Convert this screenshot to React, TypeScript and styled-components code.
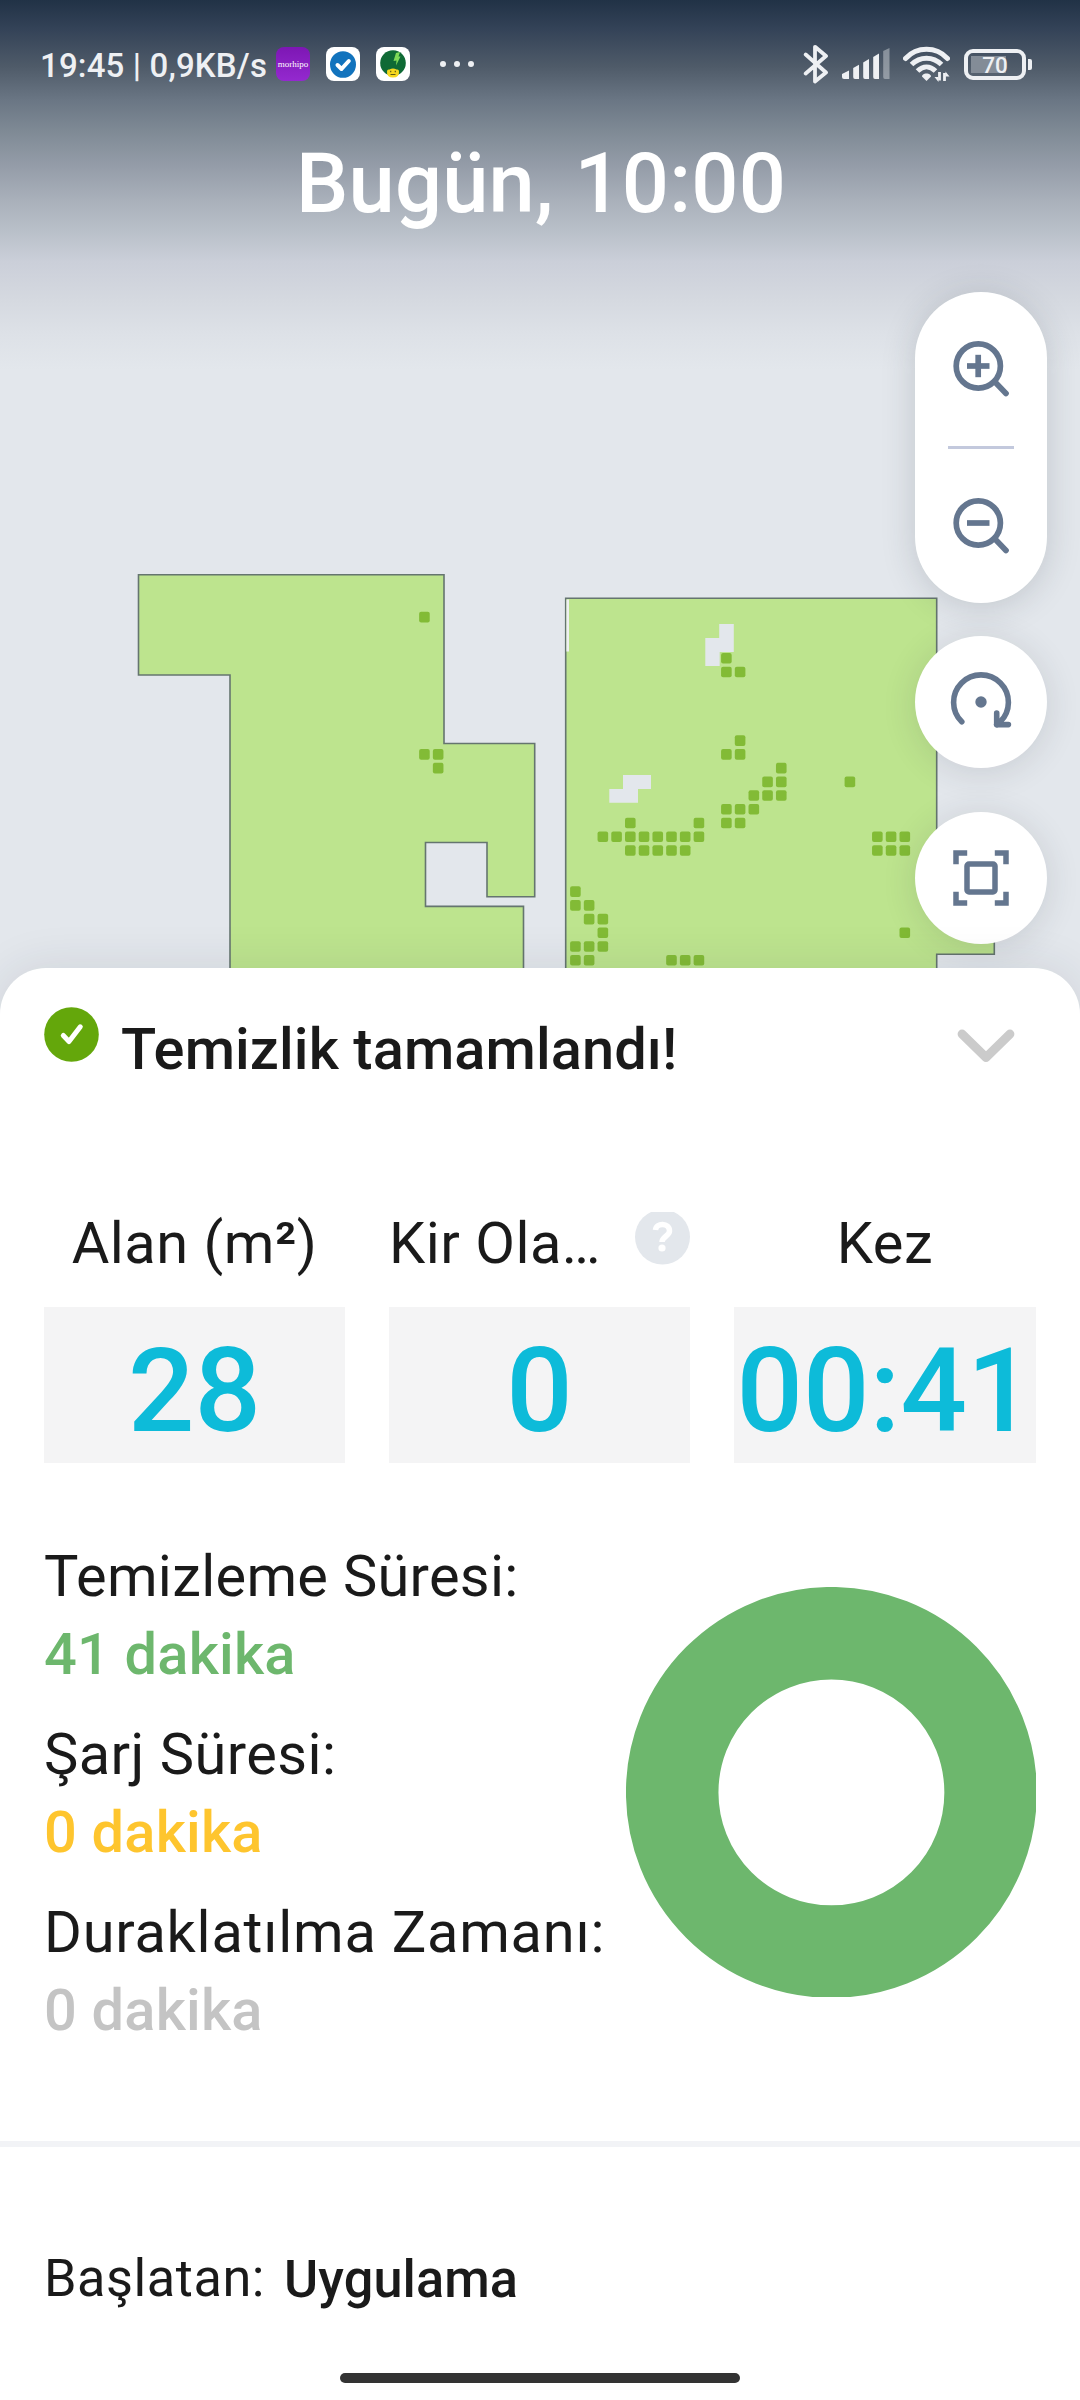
import * as React from 'react';
import styled, { createGlobalStyle } from 'styled-components';

const FONT = 'Roboto, "Noto Sans", sans-serif';

const GRID = { x: 575.4, y: 658.3, step: 13.725, size: 10.6 };

// [row, first column, last column]
const DIRT: number[][] = [
    [-3, -11, -11],
    [0, 11, 11],
    [1, 11, 12],
    [6, 12, 12],
    [7, -11, -10],
    [7, 11, 12],
    [8, -10, -10],
    [8, 15, 15],
    [9, 14, 15],
    [9, 20, 20],
    [10, 13, 15],
    [11, 11, 13],
    [12, 4, 4],
    [12, 9, 9],
    [12, 11, 12],
    [13, 2, 9],
    [13, 22, 24],
    [14, 4, 8],
    [14, 22, 24],
    [17, 0, 0],
    [18, 0, 1],
    [19, 1, 2],
    [20, 2, 2],
    [20, 24, 24],
    [21, 0, 2],
    [22, 0, 1],
    [22, 7, 9],
];

const TIMES = [
    { label: 'Temizleme Süresi:', value: '41 dakika', color: '#6db76d', tracking: 0.3 },
    { label: 'Şarj Süresi:', value: '0 dakika', color: '#fec52e', tracking: 0.45 },
    { label: 'Duraklatılma Zamanı:', value: '0 dakika', color: '#c4c4c4', tracking: 0.75 },
];

const DirtSpots = () => (
    <g fill="#82bb36">
        {DIRT.map(([row, from, to]) => {
            const spots: React.ReactNode[] = [];

            for (let col = from; col <= to; col++) {
                spots.push(
                    <rect
                        key={`${row}-${col}`}
                        x={GRID.x + col * GRID.step - GRID.size / 2}
                        y={GRID.y + row * GRID.step - GRID.size / 2}
                        width={GRID.size}
                        height={GRID.size}
                        rx="2"
                    />
                );
            }

            return spots;
        })}
    </g>
);

const FloorMap = () => (
    <MapCanvas width="1080" height="1030" viewBox="0 0 1080 1030">
        <g fill="#bde48e" stroke="#65756f" strokeWidth="1.6">
            <path d="M138.5 574.7H444V743.5H534.7V896.7H487V842.5H425.5V906.4H523.5V1040H230V675H138.5Z" />
            <path d="M565.7 598.3H936.7V890H994.3V954.3H936.7V1040H565.7Z" />
        </g>
        <path d="M566.4 599.5H569V651.5H566.4Z" fill="#eef0f2" />
        <g fill="#e3e7ec">
            <path d="M719.2 624H733.8V652H719.7V666H705.3V638H719.2Z" />
            <path d="M623 775H651V789H638V802.8H609.3V789H623Z" />
        </g>
        <DirtSpots />
    </MapCanvas>
);

const BluetoothIcon = () => (
    <svg width="26" height="40" viewBox="0 0 26 40" fill="none" stroke="#eef0f3" strokeWidth="3.8" strokeLinecap="round" strokeLinejoin="round">
        <path d="M2.7 10.5L23 28.5L12 37.5V2.8L23 12L2.7 29.5" />
    </svg>
);

const SignalIcon = () => (
    <svg width="48" height="32" viewBox="0 0 48 32" fill="#eef0f3">
        <path d="M0 26L7 22.5V31H2Q0 31 0 29Z" />
        <path d="M11.2 20L17 16.7V31H13Q11.2 31 11.2 29Z" />
        <path d="M21.2 14.5L27 11V31H23Q21.2 31 21.2 29Z" />
        <path d="M31.2 9L37 5.5V31H33Q31.2 31 31.2 29Z" />
        <path d="M41.2 3L47.5 0V31H43Q41.2 31 41.2 29Z" opacity="0.4" />
    </svg>
);

const WifiIcon = () => (
    <svg width="47" height="36" viewBox="0 0 47 36" fill="none" stroke="#eef0f3">
        <path d="M2.5 12.5C14 0.3 33 0.3 44.5 12.5" strokeWidth="5" strokeLinecap="round" />
        <path d="M8.5 18.5C17 10 30 10 38.5 18.5" strokeWidth="5" />
        <path d="M14.5 25C20 19.5 27 19.5 32.5 25" strokeWidth="5" />
        <path d="M23.5 27.5C26 27.5 28.3 29 28 30.5L23.5 35L19 30.5C18.7 29 21 27.5 23.5 27.5Z" fill="#eef0f3" stroke="none" />
        <path d="M36.5 26V34.5M41.5 35V27" strokeWidth="2.8" />
        <path d="M31.5 31H35.5V36ZM46.5 30.5H42.5V25.5Z" fill="#eef0f3" stroke="none" />
    </svg>
);

const ZoomIcon = ({ plus }: { plus?: boolean }) => (
    <svg width="56" height="58" viewBox="0 0 56 58" fill="none" stroke="#64768f" strokeWidth="5.7">
        <circle cx="25.3" cy="25" r="22.1" />
        <path d="M14 25H36.5" />
        {plus && <path d="M25.2 13.8V36.2" />}
        <path d="M42 41L53 52.5" strokeLinecap="round" />
    </svg>
);

const RotateIcon = () => (
    <svg width="66" height="66" viewBox="0 0 66 66" fill="none" stroke="#64768f" strokeWidth="5.6" strokeLinecap="round" strokeLinejoin="round">
        <path d="M13.8 52.8A27.4 27.4 0 1 1 52.2 52.8" />
        <path d="M48.7 44V55.6H60.4" />
        <path d="M48.7 55.6L52.5 52.3" />
        <circle cx="33" cy="33" r="5.7" fill="#64768f" stroke="none" />
    </svg>
);

const FitIcon = () => (
    <svg width="56" height="56" viewBox="0 0 56 56" fill="none" stroke="#64768f" strokeWidth="5.5">
        <path d="M3 14.2V3H14.2M41.8 3H53V14.2M53 41.8V53H41.8M14.2 53H3V41.8" />
        <rect x="14" y="14" width="28" height="28" rx="2" />
    </svg>
);

const TaskAppIcon = () => (
    <svg width="26" height="27" viewBox="0 0 26 27">
        <ellipse cx="13" cy="13.5" rx="13" ry="13.3" fill="#1273bd" />
        <path d="M7.5 14L11.5 18L18.8 10" fill="none" stroke="#fff" strokeWidth="4" strokeLinecap="round" strokeLinejoin="round" />
    </svg>
);

const EnergyAppIcon = () => (
    <svg width="26" height="28" viewBox="0 0 26 28">
        <circle cx="13" cy="13" r="12.8" fill="#0f6a35" />
        <path d="M16 3L20 2L18.5 6.5H20.5L16 15.5L16.5 10.5L13.5 11Z" fill="#7ed957" />
        <path d="M7 21.5Q7 19 9.5 19.5Q13 17.5 16.5 19.5Q19 19 19 21.5Q19.5 27.5 13 27.5Q6.5 27.5 7 21.5Z" fill="#f7d81e" />
        <path d="M10.5 24.5H15.5M10.7 20.8V22.3M15.3 20.8V22.3" stroke="#5d5a14" strokeWidth="1.2" />
    </svg>
);

const CheckIcon = () => (
    <svg width="55" height="55" viewBox="0 0 55 55">
        <circle cx="27.5" cy="27.5" r="27.3" fill="#64a70b" />
        <path d="M19.3 28.5L25 34.5L36.3 19.8" fill="none" stroke="#fff" strokeWidth="5" strokeLinecap="round" strokeLinejoin="round" />
    </svg>
);

const ChevronIcon = () => (
    <svg width="58" height="34" viewBox="0 0 58 34" fill="none" stroke="#cbcbcb" strokeWidth="8.8" strokeLinecap="round" strokeLinejoin="round">
        <path d="M5 5L29 28.5L53 5" />
    </svg>
);

const HelpIcon = () => (
    <svg width="55" height="53" viewBox="0 0 55 53">
        <circle cx="27.5" cy="25" r="27.5" fill="#e3e7ec" />
        <path d="M20.5 18C21 10.5 34.5 10.5 34.5 19C34.5 24 27 24.5 27 30" fill="none" stroke="#fff" strokeWidth="5.5" />
        <circle cx="27" cy="36" r="3.6" fill="#fff" />
    </svg>
);

const Donut = () => (
    <svg width="410" height="410" viewBox="0 0 410 410">
        <circle cx="205.4" cy="205.4" r="159.2" fill="none" stroke="#6db76d" strokeWidth="92.5" />
    </svg>
);

export default class CleaningReport extends React.Component {
    render() {
        return (
            <Screen>
                <GlobalStyle />
                <MapArea>
                    <FloorMap />
                    <TopShade />
                    <StatusBar>
                        <Clock>19:45 | 0,9KB/s</Clock>
                        <AppIcons>
                            <AppIcon $purple>morhipo</AppIcon>
                            <AppIcon><TaskAppIcon /></AppIcon>
                            <AppIcon><EnergyAppIcon /></AppIcon>
                        </AppIcons>
                        <Dots>
                            <Dot />
                            <Dot />
                            <Dot />
                        </Dots>
                        <SystemIcons>
                            <BluetoothIcon />
                            <SignalIcon />
                            <WifiIcon />
                            <Battery>
                                <BatteryBody>70</BatteryBody>
                                <BatteryNub />
                            </Battery>
                        </SystemIcons>
                    </StatusBar>
                    <Title>Bugün, 10:00</Title>
                    <Controls>
                        <ZoomPill>
                            <ZoomIcon plus />
                            <PillDivider />
                            <ZoomIcon />
                        </ZoomPill>
                        <RoundButton><RotateIcon /></RoundButton>
                        <RoundButton><FitIcon /></RoundButton>
                    </Controls>
                </MapArea>

                <Sheet>
                    <SheetHeader>
                        <CheckIcon />
                        <Heading>Temizlik tamamlandı!</Heading>
                        <Collapse><ChevronIcon /></Collapse>
                    </SheetHeader>

                    <Stats>
                        <Stat>
                            <StatLabel>Alan (m<Power>²</Power>)</StatLabel>
                            <StatValue>28</StatValue>
                        </Stat>
                        <Stat>
                            <StatLabel $spread>
                                Kir Ola…
                                <HelpIcon />
                            </StatLabel>
                            <StatValue>0</StatValue>
                        </Stat>
                        <Stat>
                            <StatLabel>Kez</StatLabel>
                            <StatValue>00:41</StatValue>
                        </Stat>
                    </Stats>

                    <Summary>
                        <Times>
                            {TIMES.map((item) => (
                                <div key={item.label}>
                                    <TimeLabel $tracking={item.tracking}>{item.label}</TimeLabel>
                                    <TimeValue $color={item.color}>{item.value}</TimeValue>
                                </div>
                            ))}
                        </Times>
                        <Donut />
                    </Summary>

                    <Divider />

                    <Initiator>
                        <span>Başlatan:</span>
                        <InitiatorName>Uygulama</InitiatorName>
                    </Initiator>

                    <HomeBar />
                </Sheet>
            </Screen>
        );
    }
}

const GlobalStyle = createGlobalStyle`
    body {
        margin: 0;
        background: #fff;
    }
    svg {
        display: block;
        flex: none;
    }
`;

const Screen = styled.div`
    display: flex;
    flex-direction: column;
    width: 1080px;
    height: 2400px;
    overflow: hidden;
    font-family: ${FONT};
    color: #1a1a1a;
`;

const MapArea = styled.div`
    position: relative;
    display: flex;
    flex-direction: column;
    flex: none;
    height: 1030px;
    background: #e3e7ec;
`;

const MapCanvas = styled.svg`
    position: absolute;
    top: 0;
    left: 0;
`;

const TopShade = styled.div`
    position: absolute;
    top: 0;
    left: 0;
    right: 0;
    height: 370px;
    background: linear-gradient(
        #213246 0,
        #334257 28px,
        #4f5b69 67px,
        #6a7684 100px,
        #808b96 133px,
        #959da9 167px,
        #a9b0ba 200px,
        #bac1ca 233px,
        #cbcfd9 262px,
        #d5d9e0 300px,
        #dde1e7 333px,
        #e3e7ec 370px
    );
`;

const StatusBar = styled.div`
    position: relative;
    display: flex;
    align-items: center;
    height: 128px;
    padding: 0 48px 0 40px;
`;

const Clock = styled.div`
    width: 236px;
    padding-top: 3px;
    font-size: 33px;
    font-weight: 500;
    line-height: 40px;
    letter-spacing: 0.15px;
    white-space: nowrap;
    color: #eef0f3;
`;

const AppIcons = styled.div`
    display: flex;
    gap: 16px;
`;

const AppIcon = styled.div<{ $purple?: boolean }>`
    display: flex;
    align-items: center;
    justify-content: center;
    width: 34px;
    height: 34px;
    border-radius: 8px;
    background: ${(p) => (p.$purple ? 'linear-gradient(#7d17b4, #9429cf)' : '#fff')};
    font: 400 9px 'Liberation Serif', serif;
    color: #fff;
`;

const Dots = styled.div`
    display: flex;
    gap: 8px;
    margin-left: 30px;
`;

const Dot = styled.div`
    width: 6px;
    height: 6px;
    border-radius: 50%;
    background: #eef0f3;
`;

const SystemIcons = styled.div`
    display: flex;
    align-items: center;
    gap: 13px;
    margin-left: auto;
`;

const Battery = styled.div`
    display: flex;
    align-items: center;
    gap: 2px;
    margin-left: 1px;
`;

const BatteryBody = styled.div`
    display: flex;
    align-items: center;
    justify-content: center;
    box-sizing: border-box;
    width: 62px;
    height: 31px;
    padding-top: 1px;
    border: 4px solid #eef0f3;
    border-radius: 9px;
    background: linear-gradient(90deg, #838c97, #838c97) 3px 3px / 35px 17px no-repeat;
    font-size: 22.5px;
    font-weight: 500;
    line-height: 22px;
    color: #eef0f3;
`;

const BatteryNub = styled.div`
    width: 4px;
    height: 11px;
    border-radius: 0 2px 2px 0;
    background: #eef0f3;
`;

const Title = styled.div`
    position: relative;
    margin-top: 6px;
    padding-left: 2px;
    font-size: 83px;
    font-weight: 500;
    line-height: 100px;
    letter-spacing: 0.2px;
    text-align: center;
    color: #fff;
`;

const Controls = styled.div`
    position: relative;
    display: flex;
    flex-direction: column;
    align-self: flex-end;
    margin: 58px 33px 0 0;
`;

const ZoomPill = styled.div`
    display: flex;
    flex-direction: column;
    align-items: center;
    justify-content: space-between;
    box-sizing: border-box;
    width: 132px;
    height: 311px;
    padding: 49px 0 47px;
    border-radius: 66px;
    background: #fff;
    box-shadow: 0 4px 34px rgba(40, 50, 60, 0.18);
`;

const PillDivider = styled.div`
    width: 66px;
    height: 3px;
    margin-bottom: 2px;
    background: #c3c9dd;
`;

const RoundButton = styled.div`
    display: flex;
    align-items: center;
    justify-content: center;
    width: 132px;
    height: 132px;
    margin-top: 33px;
    border-radius: 50%;
    background: #fff;
    box-shadow: 0 4px 34px rgba(40, 50, 60, 0.14);

    & + & {
        margin-top: 44px;
    }
`;

const Sheet = styled.div`
    position: relative;
    display: flex;
    flex-direction: column;
    flex: 1;
    box-sizing: border-box;
    margin-top: -62px;
    padding-top: 39px;
    border-radius: 46px 46px 0 0;
    background: #fff;
    box-shadow: 0 0 48px rgba(40, 50, 60, 0.11);
`;

const SheetHeader = styled.div`
    display: flex;
    height: 202px;
    padding: 0 65px 0 44px;
`;

const Heading = styled.div`
    margin: 8px 0 0 22px;
    font-size: 57.75px;
    font-weight: 500;
    line-height: 69px;
    letter-spacing: 0.1px;
`;

const Collapse = styled.div`
    margin: 22px 0 0 auto;
`;

const Stats = styled.div`
    display: grid;
    grid-template-columns: 301px 301px 302px;
    gap: 44px;
    padding: 0 44px;
`;

const Stat = styled.div`
    display: flex;
    flex-direction: column;
    gap: 30px;
    min-width: 0;
`;

const StatLabel = styled.div<{ $spread?: boolean }>`
    display: flex;
    justify-content: ${(p) => (p.$spread ? 'space-between' : 'center')};
    height: 68px;
    font-size: 57.75px;
    line-height: 68px;
    letter-spacing: 0.5px;
    white-space: pre;

    svg {
        margin-top: 3px;
    }
`;

const Power = styled.span`
    font-weight: 500;
`;

const StatValue = styled.div`
    box-sizing: border-box;
    height: 156px;
    padding-top: 12px;
    background: #f4f4f5;
    font-size: 117px;
    font-weight: 500;
    line-height: 144px;
    text-align: center;
    color: #0dbbd9;
`;

const Summary = styled.div`
    display: flex;
    align-items: center;
    justify-content: space-between;
    box-sizing: border-box;
    height: 678px;
    padding: 0 44px 20px;
`;

const Times = styled.div`
    display: flex;
    flex-direction: column;
    gap: 22px;
    width: 582px;
    padding-top: 2px;
    font-size: 57.75px;
    line-height: 78px;
    white-space: nowrap;
`;

const TimeLabel = styled.div<{ $tracking: number }>`
    letter-spacing: ${(p) => p.$tracking}px;
`;

const TimeValue = styled.div<{ $color: string }>`
    font-weight: 500;
    letter-spacing: 0.2px;
    color: ${(p) => p.$color};
`;

const Divider = styled.div`
    height: 6px;
    background: #f2f3f6;
`;

const Initiator = styled.div`
    display: flex;
    gap: 19px;
    margin-top: 102px;
    padding: 0 44px;
    font-size: 52.25px;
    line-height: 60px;
    letter-spacing: 0.55px;
`;

const InitiatorName = styled.span`
    padding-top: 1px;
    font-weight: 500;
    letter-spacing: 0.1px;
`;

const HomeBar = styled.div`
    align-self: center;
    width: 400px;
    height: 10px;
    margin: auto 0 17px;
    border-radius: 5px;
    background: #333;
`;
